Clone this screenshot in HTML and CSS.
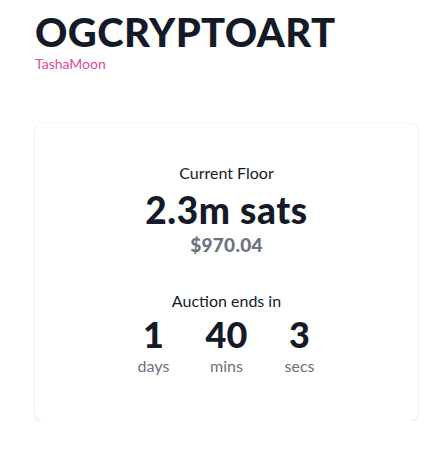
FILE: index.html
```html
<!DOCTYPE html>
<html lang="en">
<head>
    <meta charset="UTF-8">
    <meta name="viewport" content="width=device-width, initial-scale=1.0">
    <title>OGCRYPTOART</title>
    <link rel="stylesheet" href="styles.css">
</head>
<body>
    <div class="page">
        <div class="header">
            <h1 class="title">OGCRYPTOART</h1>
            <div class="artist">TashaMoon</div>
        </div>
        <div class="card">
            <div class="label">Current Floor</div>
            <div class="price">2.3m sats</div>
            <div class="usd">$970.04</div>
            <div class="label auction">Auction ends in</div>
            <div class="countdown">
                <div class="unit">
                    <div class="num">1</div>
                    <div class="unit-name">days</div>
                </div>
                <div class="unit">
                    <div class="num">40</div>
                    <div class="unit-name">mins</div>
                </div>
                <div class="unit">
                    <div class="num">3</div>
                    <div class="unit-name">secs</div>
                </div>
            </div>
        </div>
    </div>
</body>
</html>
```

FILE: styles.css
```css
body {
    margin: 0;
    font-family: Lato, "Open Sans", sans-serif;
    background-color: #fff;
    color: #141a28;
}

.page {
    padding: 11px 28px 0 35px;
}

.title {
    margin: 0;
    font-size: 40px;
    line-height: 42px;
    font-weight: 900;
    letter-spacing: 0.4px;
}

.artist {
    color: #e0489a;
    font-size: 14px;
    line-height: 18px;
    margin-top: 2px;
}

.card {
    margin-top: 50px;
    border-radius: 8px;
    background-color: #fff;
    box-shadow: 0 1px 3px rgba(0, 0, 0, 0.12), 0 0 1px rgba(0, 0, 0, 0.08);
    padding: 40px 0 44px;
    text-align: center;
}

.label {
    font-size: 16px;
    line-height: 20px;
}

.price {
    font-size: 37px;
    font-weight: 900;
    line-height: 40px;
    margin-top: 7px;
    letter-spacing: 0.6px;
}

.usd {
    color: #6b7280;
    font-size: 19px;
    font-weight: 900;
    line-height: 24px;
    margin-top: 3px;
    letter-spacing: 0.3px;
}

.auction {
    margin-top: 34px;
}

.countdown {
    display: flex;
    justify-content: center;
    gap: 28px;
    margin-top: 4px;
}

.unit {
    width: 45px;
}

.num {
    font-size: 36px;
    font-weight: 900;
    line-height: 38px;
}

.unit-name {
    color: #6b7280;
    font-size: 16px;
    line-height: 22px;
    margin-top: 2px;
}
```
